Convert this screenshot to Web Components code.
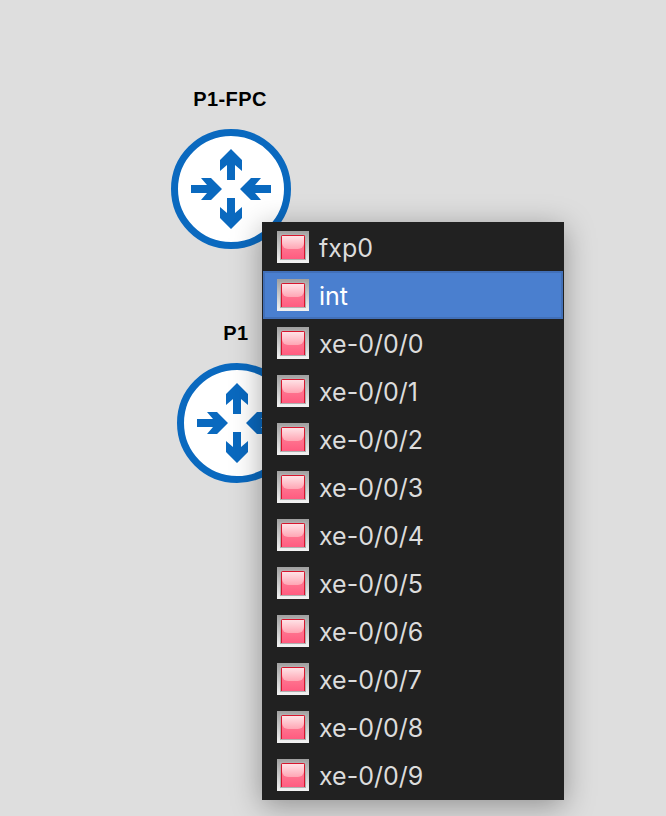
<!DOCTYPE html>
<html>
<head>
<meta charset="utf-8">
<title>Topology</title>
<style>
html, body { margin: 0; height: 100%; background: #dedede; overflow: hidden; }
</style>
</head>
<body>
<topo-canvas>
    <router-node style="left:171px;top:88px" data-label="P1-FPC"></router-node>
    <router-node style="left:177px;top:322px" data-label="P1"></router-node>
    <port-menu style="left:262px;top:222px">
        <port-item>fxp0</port-item>
        <port-item selected>int</port-item>
        <port-item>xe-0/0/0</port-item>
        <port-item>xe-0/0/1</port-item>
        <port-item>xe-0/0/2</port-item>
        <port-item>xe-0/0/3</port-item>
        <port-item>xe-0/0/4</port-item>
        <port-item>xe-0/0/5</port-item>
        <port-item>xe-0/0/6</port-item>
        <port-item>xe-0/0/7</port-item>
        <port-item>xe-0/0/8</port-item>
        <port-item>xe-0/0/9</port-item>
    </port-menu>
</topo-canvas>
<script>
(function () {
    class TopoCanvas extends HTMLElement {
        constructor() {
            super();
            this.attachShadow({ mode: "open" });
            this.shadowRoot.innerHTML = `
            <style>
            :host {
                background: #dedede;
                display: block;
                height: 816px;
                position: relative;
                width: 666px;
            }
            </style>
            <slot></slot>`;
        }
    }
    customElements.define("topo-canvas", TopoCanvas);
})();
(function () {
    const template = document.createElement("template");
    template.innerHTML = `
    <style>
    :host {
        align-items: center;
        display: flex;
        flex-direction: column;
        gap: 19px;
        position: absolute;
        width: 120px;
    }
    .label {
        color: #000;
        font-family: "Liberation Sans", Arial, sans-serif;
        font-size: 20px;
        font-weight: 700;
        height: 22px;
        letter-spacing: 0.4px;
        line-height: 22px;
        margin-left: -2px;
        white-space: nowrap;
    }
    svg {
        display: block;
    }
    </style>
    <span class="label"></span>
    <svg width="120" height="120" viewBox="0 0 120 120">
        <circle cx="60" cy="60" r="56.5" fill="#fff" stroke="#0a69bf" stroke-width="7"/>
        <g fill="#0a69bf">
            <path d="M60 20 71 31 71 42 64 36 64 51 56 51 56 36 49 42 49 31Z"/>
            <path d="M60 100 71 89 71 78 64 84 64 69 56 69 56 84 49 78 49 89Z"/>
            <path d="M51 60 40 49 30 49 36 56 20 56 20 64 36 64 30 71 40 71Z"/>
            <path d="M69 60 80 49 90 49 84 56 100 56 100 64 84 64 90 71 80 71Z"/>
        </g>
    </svg>`;
    class RouterNode extends HTMLElement {
        constructor() {
            super();
            this.attachShadow({ mode: "open" });
            this.shadowRoot.appendChild(template.content.cloneNode(true));
        }
        connectedCallback() {
            this.shadowRoot.querySelector(".label").textContent = this.getAttribute("data-label");
        }
    }
    customElements.define("router-node", RouterNode);
})();
(function () {
    const template = document.createElement("template");
    template.innerHTML = `
    <style>
    :host {
        background: #212121;
        box-shadow: 0 6px 28px rgb(0 0 0 / 35%);
        box-sizing: border-box;
        display: flex;
        flex-direction: column;
        height: 578px;
        padding-top: 1px;
        position: absolute;
        width: 302px;
    }
    </style>
    <slot></slot>`;
    class PortMenu extends HTMLElement {
        constructor() {
            super();
            this.attachShadow({ mode: "open" });
            this.shadowRoot.appendChild(template.content.cloneNode(true));
        }
    }
    customElements.define("port-menu", PortMenu);
})();
(function () {
    const template = document.createElement("template");
    template.innerHTML = `
    <style>
    :host {
        align-items: center;
        box-sizing: border-box;
        color: #dcdcdc;
        display: flex;
        font-family: Inter, sans-serif;
        font-size: 25px;
        gap: 10px;
        height: 48px;
        margin: 0 1px;
        padding-left: 14px;
    }
    :host([selected]) {
        background: #4a7fcf;
        border: solid 2px #4270b8;
        color: #fff;
        padding-left: 12px;
    }
    .led {
        background: linear-gradient(#a0a0a0, #f4f4f4);
        box-sizing: border-box;
        flex: none;
        height: 32px;
        padding: 3px;
        width: 32px;
    }
    .ring {
        background: #b0b0b0;
        box-sizing: border-box;
        display: block;
        height: 26px;
        padding: 1px;
        width: 26px;
    }
    .ring i {
        background: linear-gradient(#ff8c9e, #ff5c80);
        border: solid 1px #d8142c;
        border-bottom: none;
        border-radius: 2px 2px 0 0;
        box-sizing: border-box;
        display: block;
        height: 24px;
        position: relative;
        width: 24px;
    }
    .ring i::before {
        background: linear-gradient(#ffe2e6, #ffa6b4);
        border-radius: 0 0 6px 6px;
        content: "";
        height: 13px;
        left: 0;
        position: absolute;
        right: 0;
        top: 0;
    }
    .text {
        margin-top: 2px;
        white-space: nowrap;
    }
    </style>
    <span class="led"><span class="ring"><i></i></span></span>
    <span class="text"><slot></slot></span>`;
    class PortItem extends HTMLElement {
        constructor() {
            super();
            this.attachShadow({ mode: "open" });
            this.shadowRoot.appendChild(template.content.cloneNode(true));
        }
    }
    customElements.define("port-item", PortItem);
})();
</script>
</body>
</html>
